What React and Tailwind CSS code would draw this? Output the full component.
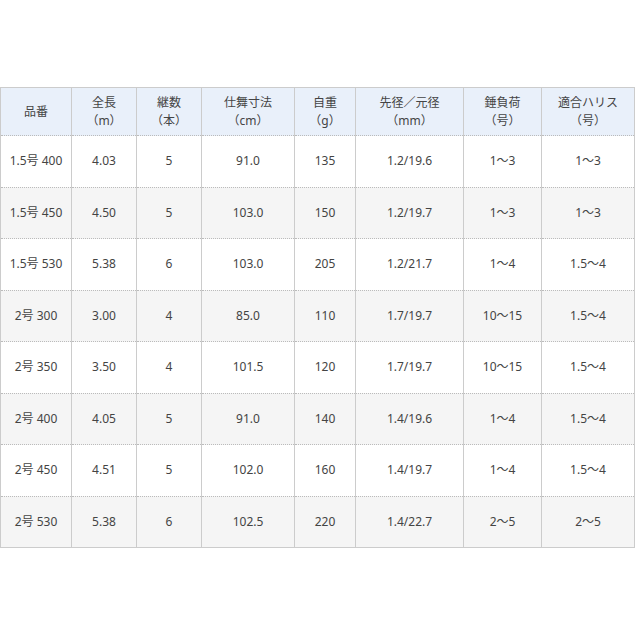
import React from 'react';

const cols = [
  { label: '品番', unit: '', w: 'w-[71px]' },
  { label: '全長', unit: '(m)', w: 'w-[65px]' },
  { label: '継数', unit: '(本)', w: 'w-[65px]' },
  { label: '仕舞寸法', unit: '(cm)', w: 'w-[93px]' },
  { label: '自重', unit: '(g)', w: 'w-[61px]' },
  { label: '先径／元径', unit: '(mm)', w: 'w-[108px]' },
  { label: '錘負荷', unit: '(号)', w: 'w-[78px]' },
  { label: '適合ハリス', unit: '(号)', w: 'w-[93px]' },
];

const rows = [
  ['1.5号 400', '4.03', '5', '91.0', '135', '1.2/19.6', '1~3', '1~3'],
  ['1.5号 450', '4.50', '5', '103.0', '150', '1.2/19.7', '1~3', '1~3'],
  ['1.5号 530', '5.38', '6', '103.0', '205', '1.2/21.7', '1~4', '1.5~4'],
  ['2号 300', '3.00', '4', '85.0', '110', '1.7/19.7', '10~15', '1.5~4'],
  ['2号 350', '3.50', '4', '101.5', '120', '1.7/19.7', '10~15', '1.5~4'],
  ['2号 400', '4.05', '5', '91.0', '140', '1.4/19.6', '1~4', '1.5~4'],
  ['2号 450', '4.51', '5', '102.0', '160', '1.4/19.7', '1~4', '1.5~4'],
  ['2号 530', '5.38', '6', '102.5', '220', '1.4/22.7', '2~5', '2~5'],
];

export default function App() {
  return (
    <div className="min-h-screen bg-white pt-[87px] text-[12px] text-[#444] [font-family:'Noto_Sans','Noto_Sans_CJK_JP',sans-serif]">
      <table className="w-[635px] table-fixed border-collapse border border-[#ccc]">
        <thead>
          <tr className="h-[48px] bg-[#e9f0fa]">
            {cols.map((c, i) => (
              <th
                key={i}
                className={`${c.w} border-x border-[#ccc] border-b border-b-[#bbb] border-dotted font-normal leading-[18px] text-center`}
                style={{ borderLeftStyle: 'solid', borderRightStyle: 'solid' }}
              >
                <div>{c.label}</div>
                {c.unit && <div>{c.unit.replace('(', '（').replace(')', '）')}</div>}
              </th>
            ))}
          </tr>
        </thead>
        <tbody>
          {rows.map((r, ri) => (
            <tr key={ri} className={`h-[51.5px] ${ri % 2 === 1 ? 'bg-[#f5f5f5]' : 'bg-white'}`}>
              {r.map((v, ci) => (
                <td
                  key={ci}
                  className={`border-x border-solid border-[#ccc] text-center ${ri < rows.length - 1 ? 'border-b border-b-[#bbb]' : ''}`}
                  style={ri < rows.length - 1 ? { borderBottomStyle: 'dotted' } : undefined}
                >
                  {v.replace(/~/g, '～')}
                </td>
              ))}
            </tr>
          ))}
        </tbody>
      </table>
    </div>
  );
}
